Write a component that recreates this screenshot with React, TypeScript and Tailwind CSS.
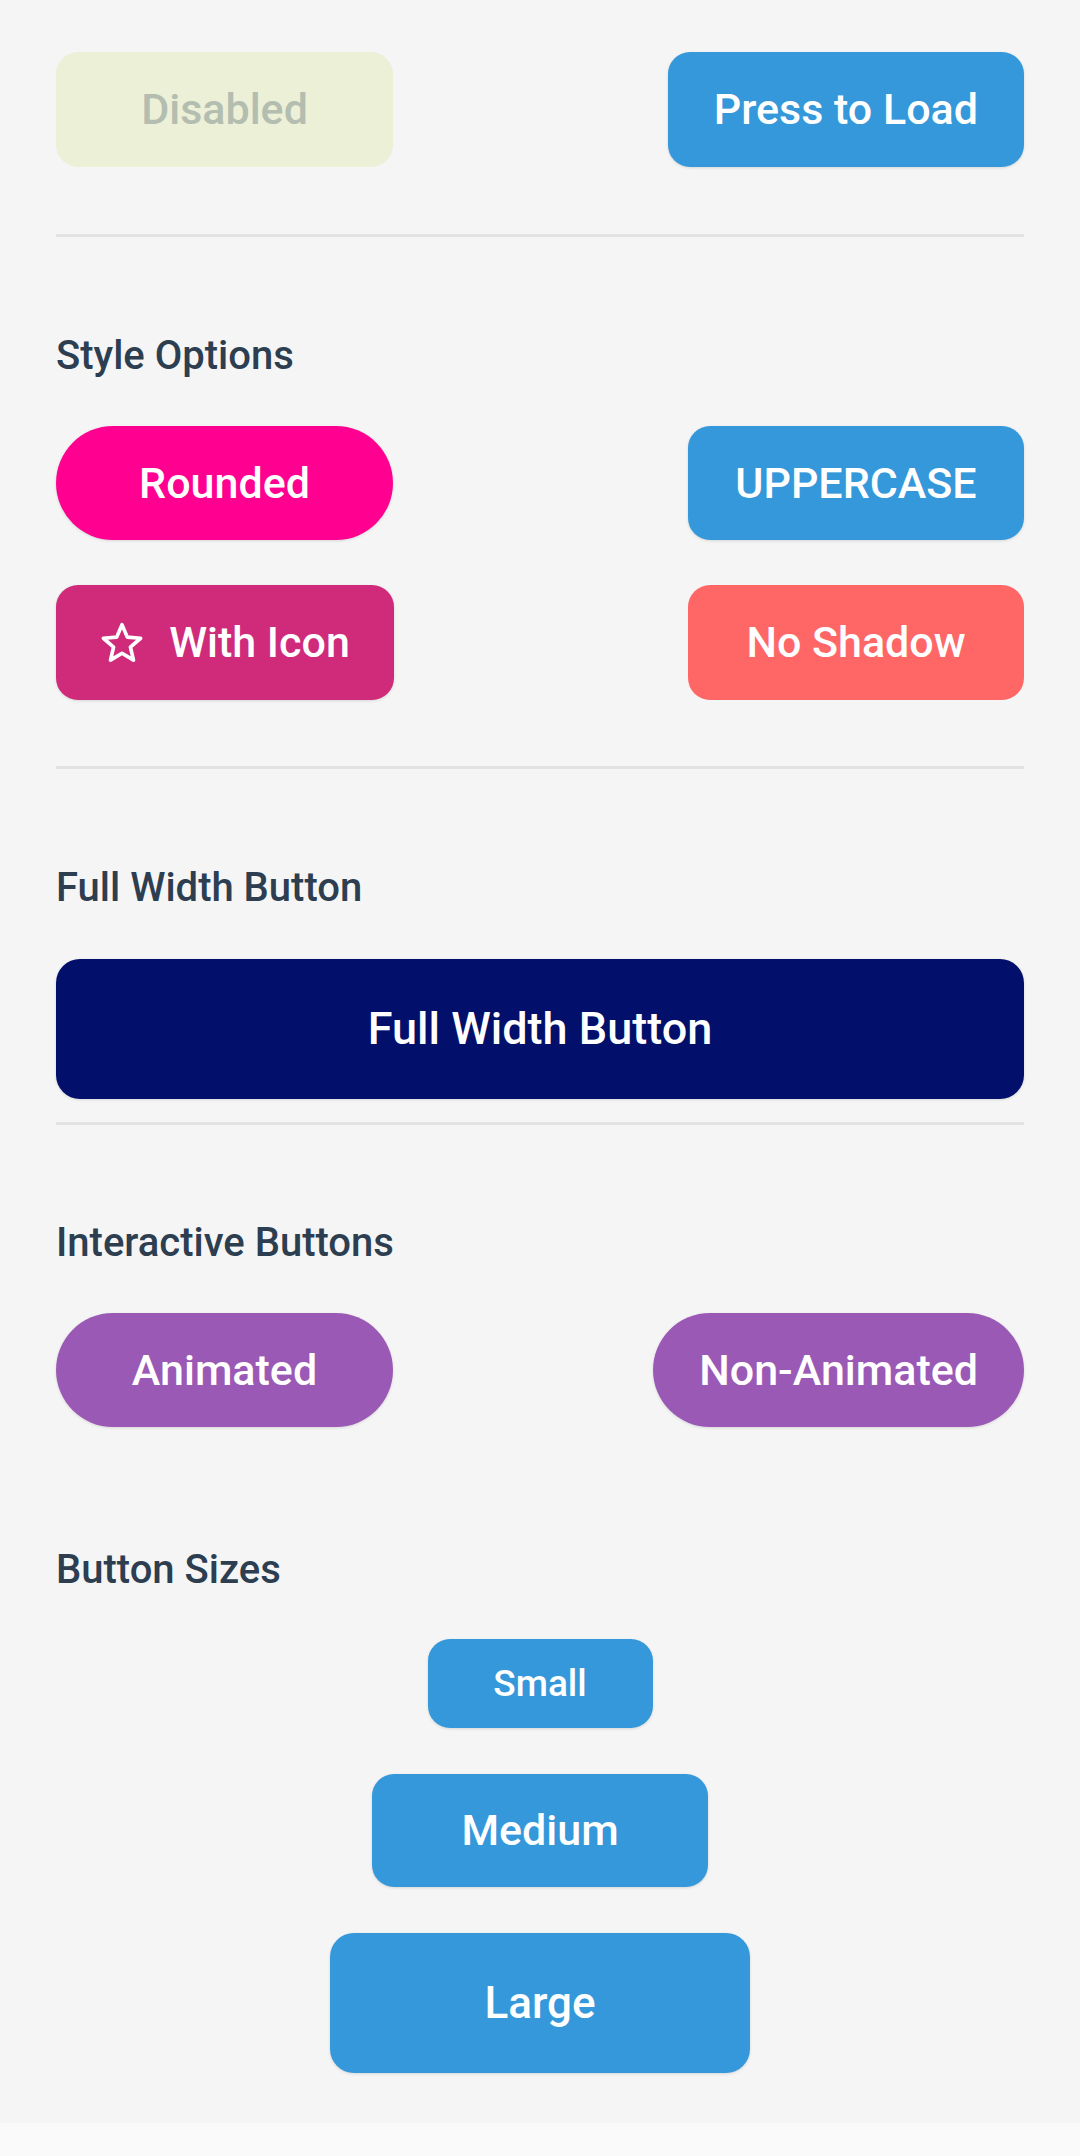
import React from "react";

const font = { fontFamily: "Roboto, 'Noto Sans', sans-serif" };

function Star() {
  return (
    <svg width="44" height="42" viewBox="0 0 24 23" fill="none" stroke="white" strokeWidth="2" strokeLinejoin="round">
      <polygon points="12,1.5 14.9,8.3 22.2,8.9 16.6,13.7 18.3,20.9 12,17.1 5.7,20.9 7.4,13.7 1.8,8.9 9.1,8.3" />
    </svg>
  );
}

function Divider({ className = "" }: { className?: string }) {
  return <div className={"h-[3px] bg-[#e2e2e2] " + className} />;
}

function Heading({ children, className = "" }: { children: React.ReactNode; className?: string }) {
  return (
    <div className={"text-[40px] leading-[48px] font-medium text-[#2c3e50] " + className}>{children}</div>
  );
}

const btn = "flex items-center justify-center text-white font-medium shadow-[0_1px_3px_rgba(0,0,0,0.12)]";

export default function App() {
  return (
    <div className="min-h-[2156px] bg-[#f5f5f5] flex flex-col" style={font}>
      <div className="px-[56px] pt-[52px] pb-[50px] flex flex-col">
        <div className="flex justify-between">
          <div className="h-[115px] w-[337px] rounded-[22px] bg-[#ebf0d7] flex items-center justify-center text-[43px] font-medium text-[#b3bdb0]">
            Disabled
          </div>
          <div className={btn + " h-[115px] px-[46px] min-w-[337px] rounded-[22px] bg-[#3498db] text-[43px]"}>
            Press to Load
          </div>
        </div>

        <Divider className="mt-[67px]" />

        <Heading className="mt-[95px]">Style Options</Heading>

        <div className="mt-[46px] flex justify-between">
          <div className={btn + " h-[114px] w-[337px] rounded-full bg-[#ff0090] text-[43px]"}>Rounded</div>
          <div className={btn + " h-[114px] w-[336px] rounded-[22px] bg-[#3498db] text-[43px] uppercase"}>Uppercase</div>
        </div>

        <div className="mt-[45px] flex justify-between">
          <div className={btn + " h-[115px] w-[338px] rounded-[22px] bg-[#d02a7a] text-[43px] gap-[25px]"}>
            <Star />
            <span>With Icon</span>
          </div>
          <div className="h-[115px] w-[336px] rounded-[22px] bg-[#ff6666] text-[43px] flex items-center justify-center text-white font-medium">
            No Shadow
          </div>
        </div>

        <Divider className="mt-[66px]" />

        <Heading className="mt-[95px]">Full Width Button</Heading>

        <div className={btn + " mt-[47px] h-[140px] w-full rounded-[24px] bg-[#020f6b] text-[45px]"}>
          Full Width Button
        </div>

        <Divider className="mt-[23px]" />

        <Heading className="mt-[94px]">Interactive Buttons</Heading>

        <div className="mt-[46px] flex justify-between">
          <div className={btn + " h-[114px] w-[337px] rounded-full bg-[#9b59b6] text-[43px]"}>Animated</div>
          <div className={btn + " h-[114px] px-[46px] rounded-full bg-[#9b59b6] text-[43px]"}>Non-Animated</div>
        </div>

        <Heading className="mt-[119px]">Button Sizes</Heading>

        <div className="mt-[45px] flex flex-col items-center gap-[46px]">
          <div className={btn + " h-[89px] w-[225px] rounded-[22px] bg-[#3498db] text-[37px]"}>Small</div>
          <div className={btn + " h-[113px] w-[336px] rounded-[22px] bg-[#3498db] text-[43px]"}>Medium</div>
          <div className={btn + " h-[140px] w-[420px] rounded-[24px] bg-[#3498db] text-[44px]"}>Large</div>
        </div>
      </div>
      <div className="flex-1 bg-[#fafafa]" />
    </div>
  );
}
